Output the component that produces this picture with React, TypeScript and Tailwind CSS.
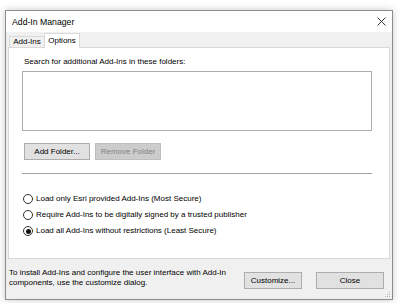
import React from "react";

const font = { fontFamily: '"Liberation Sans", Arial, sans-serif' };

function Radio({ checked, label }: { checked?: boolean; label: string }) {
  return (
    <div className="flex items-center h-[16px]">
      <div className="ml-[1px] w-[10px] h-[10px] rounded-full border border-[#333333] bg-white flex items-center justify-center">
        {checked && <div className="w-[5px] h-[5px] rounded-full bg-[#111111]" />}
      </div>
      <span className="ml-[3px] text-[8px] leading-[10px] text-black whitespace-nowrap">{label}</span>
    </div>
  );
}

export default function App() {
  return (
    <div className="w-[400px] h-[303px] bg-white pt-[10px] pl-[5px]" style={font}>
      <div className="w-[388px] h-[290px] border border-[#8c8c8c] bg-[#f0f0f0] flex flex-col shadow-[0_0_7px_rgba(0,0,0,0.22)]">
        {/* Title bar */}
        <div className="h-[21px] bg-white flex items-center justify-between pl-[6px] pr-[6px]">
          <span className="text-[8.7px] leading-[10px] text-black">Add-In Manager</span>
          <svg width="9" height="9" viewBox="0 0 9 9" className="mr-[0px]">
            <path d="M0.5 0.5 L8.5 8.5 M8.5 0.5 L0.5 8.5" stroke="#222" strokeWidth="0.9" />
          </svg>
        </div>
        {/* Tab strip */}
        <div className="h-[15px] flex items-end pl-[3px]">
          <div className="w-[35px] h-[11px] border-t border-l border-[#d9d9d9] bg-[#f0f0f0] flex items-center justify-center text-[8px] leading-[10px] text-black">
            Add-Ins
          </div>
          <div className="relative z-10 w-[36px] h-[15px] mb-[-1px] border-t border-l border-r border-[#d9d9d9] bg-white flex items-start justify-center pt-[2px] text-[8px] leading-[10px] text-black">
            Options
          </div>
        </div>
        {/* Panel */}
        <div className="mx-[2px] h-[212px] border border-[#d9d9d9] bg-white pl-[13px] pt-[9px]">
          <div className="ml-[2px] h-[10px] text-[8px] leading-[10px] text-black whitespace-nowrap">
            Search for additional Add-Ins in these folders:
          </div>
          <div className="mt-[4px] w-[350px] h-[60px] border border-[#abadb3] bg-white" />
          <div className="mt-[12px] ml-[2px] flex gap-[5px]">
            <div className="w-[66px] h-[17px] border border-[#adadad] bg-[#e1e1e1] flex items-center justify-center text-[8px] leading-[10px] text-black">
              Add Folder...
            </div>
            <div className="w-[66px] h-[17px] border border-[#bfbfbf] bg-[#cccccc] flex items-center justify-center text-[8px] leading-[10px] text-[#838383]">
              Remove Folder
            </div>
          </div>
          <div className="mt-[13px] w-[350px] h-px bg-[#a0a0a0]" />
          <div className="mt-[17px] flex flex-col">
            <Radio label="Load only Esri provided Add-Ins (Most Secure)" />
            <Radio label="Require Add-Ins to be digitally signed by a trusted publisher" />
            <Radio checked label="Load all Add-Ins without restrictions (Least Secure)" />
          </div>
        </div>
        {/* Footer */}
        <div className="relative flex-1 flex items-start">
          <div className="ml-[3px] mt-[9px] text-[8px] leading-[10px] text-black whitespace-nowrap">
            To install Add-Ins and configure the user interface with Add-In
            <br />
            components, use the customize dialog.
          </div>
          <div className="ml-auto mr-[8px] mt-[13px] flex gap-[14px]">
            <div className="w-[58px] h-[17px] border border-[#adadad] bg-[#e1e1e1] flex items-center justify-center text-[8px] leading-[10px] text-black">
              Customize...
            </div>
            <div className="w-[68px] h-[17px] border border-[#adadad] bg-[#e1e1e1] flex items-center justify-center text-[8px] leading-[10px] text-black">
              Close
            </div>
          </div>
          <svg width="6" height="6" viewBox="0 0 6 6" className="absolute right-[1px] bottom-[1px]">
            <rect x="4" y="0" width="1" height="1" fill="#b5b5b5" />
            <rect x="2" y="2" width="1" height="1" fill="#b5b5b5" />
            <rect x="4" y="2" width="1" height="1" fill="#b5b5b5" />
            <rect x="0" y="4" width="1" height="1" fill="#b5b5b5" />
            <rect x="2" y="4" width="1" height="1" fill="#b5b5b5" />
            <rect x="4" y="4" width="1" height="1" fill="#b5b5b5" />
          </svg>
        </div>
      </div>
    </div>
  );
}
